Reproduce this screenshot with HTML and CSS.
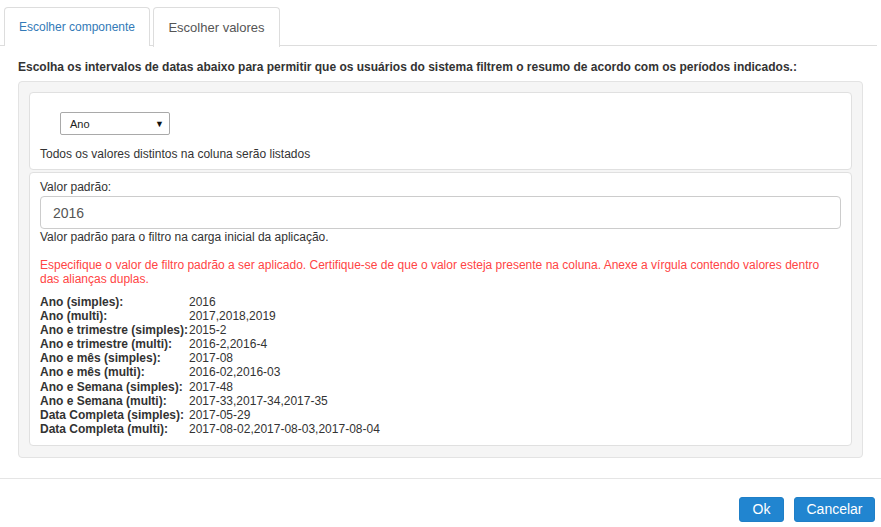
FILE: index.html
```html
<!DOCTYPE html>
<html>
<head>
<meta charset="utf-8">
<link rel="stylesheet" href="styles.css">
</head>
<body>
<div class="page">
  <ul class="tabs">
    <li class="tab"><span class="tab-link">Escolher componente</span></li>
    <li class="tab active"><span class="tab-link">Escolher valores</span></li>
  </ul>
  <div class="content">
    <p class="intro">Escolha os intervalos de datas abaixo para permitir que os usuários do sistema filtrem o resumo de acordo com os períodos indicados.:</p>
    <div class="well">
      <div class="card card-top">
        <div class="select">
          <span>Ano</span>
          <span class="caret">&#9660;</span>
        </div>
        <div class="help">Todos os valores distintos na coluna serão listados</div>
      </div>
      <div class="card card-main">
        <div class="label">Valor padrão:</div>
        <div class="input">2016</div>
        <div class="help2">Valor padrão para o filtro na carga inicial da aplicação.</div>
        <p class="warn">Especifique o valor de filtro padrão a ser aplicado. Certifique-se de que o valor esteja presente na coluna. Anexe a vírgula contendo valores dentro das alianças duplas.</p>
        <div class="examples">
          <b>Ano (simples):</b><span>2016</span>
          <b>Ano (multi):</b><span>2017,2018,2019</span>
          <b>Ano e trimestre (simples):</b><span>2015-2</span>
          <b>Ano e trimestre (multi):</b><span>2016-2,2016-4</span>
          <b>Ano e mês (simples):</b><span>2017-08</span>
          <b>Ano e mês (multi):</b><span>2016-02,2016-03</span>
          <b>Ano e Semana (simples):</b><span>2017-48</span>
          <b>Ano e Semana (multi):</b><span>2017-33,2017-34,2017-35</span>
          <b>Data Completa (simples):</b><span>2017-05-29</span>
          <b>Data Completa (multi):</b><span>2017-08-02,2017-08-03,2017-08-04</span>
        </div>
      </div>
    </div>
  </div>
  <div class="footer">
    <button class="btn btn-ok">Ok</button>
    <button class="btn btn-cancel">Cancelar</button>
  </div>
</div>
</body>
</html>
```
FILE: styles.css
```css
* { box-sizing: border-box; }
html, body { margin: 0; padding: 0; background: #fff; }
body {
  font-family: "Liberation Sans", Arial, sans-serif;
  font-size: 12px;
  color: #333;
}
.page { width: 881px; height: 527px; overflow: hidden; }
.tabs {
  list-style: none;
  margin: 0;
  padding: 7px 0 0 4px;
  display: flex;
  gap: 3px;
  border-bottom: 1px solid #ddd;
  width: 877px;
  height: 46px;
}
.tab {
  height: 39px;
  width: 146px;
  border: 1px solid #ddd;
  border-bottom: none;
  border-radius: 4px 4px 0 0;
  display: flex;
  align-items: center;
  justify-content: center;
  font-size: 12px;
  color: #337ab7;
  background: #fff;
}
.tab.active {
  color: #555;
  font-size: 13px;
  width: 127px;
  height: 40px;
  margin-bottom: -1px;
  padding-bottom: 1px;
}
.content { padding: 0 18px; }
.intro {
  font-weight: bold;
  margin: 14px 0 6px 0;
  line-height: 15px;
}
.well {
  width: 845px;
  background: #f5f5f5;
  border: 1px solid #e3e3e3;
  border-radius: 4px;
  padding: 10px 10px 11px 10px;
  display: flex;
  flex-direction: column;
  gap: 2px;
}
.card {
  background: #fff;
  border: 1px solid #e0e0e0;
  border-radius: 4px;
  padding: 0 10px;
}
.card-top { height: 78px; padding-top: 19px; }
.select {
  margin-left: 20px;
  width: 110px;
  height: 23px;
  border: 1px solid #a9a9a9;
  border-radius: 2px;
  display: flex;
  align-items: center;
  justify-content: space-between;
  padding: 0 5px 0 9px;
  font-size: 11px;
  color: #222;
}
.caret { font-size: 9px; color: #111; }
.help { margin-top: 12px; line-height: 15px; }
.card-main { padding-top: 7px; padding-bottom: 9px; }
.label { line-height: 15px; }
.input {
  margin-top: 1px;
  height: 33px;
  border: 1px solid #ccc;
  border-radius: 4px;
  display: flex;
  align-items: center;
  padding: 0 12px;
  font-size: 14px;
  color: #555;
}
.help2 { line-height: 15px; margin-top: 1px; }
.warn {
  color: #f44;
  margin: 13px 0 9px 0;
  line-height: 14px;
}
.examples {
  display: grid;
  grid-template-columns: 149px auto;
  line-height: 14.1px;
}
.examples b { font-weight: bold; }
.footer {
  margin-top: 20px;
  border-top: 1px solid #e5e5e5;
  display: flex;
  justify-content: flex-end;
  gap: 10px;
  padding: 18px 6px 0 0;
}
.btn {
  font-family: "Liberation Sans", Arial, sans-serif;
  font-size: 14px;
  color: #fff;
  background: #2185d0;
  border: 1px solid #1f7fc7;
  border-radius: 3px;
  height: 25px;
  padding: 0;
  line-height: 23px;
}
.btn-ok { width: 45px; }
.btn-cancel { width: 81px; }
```
